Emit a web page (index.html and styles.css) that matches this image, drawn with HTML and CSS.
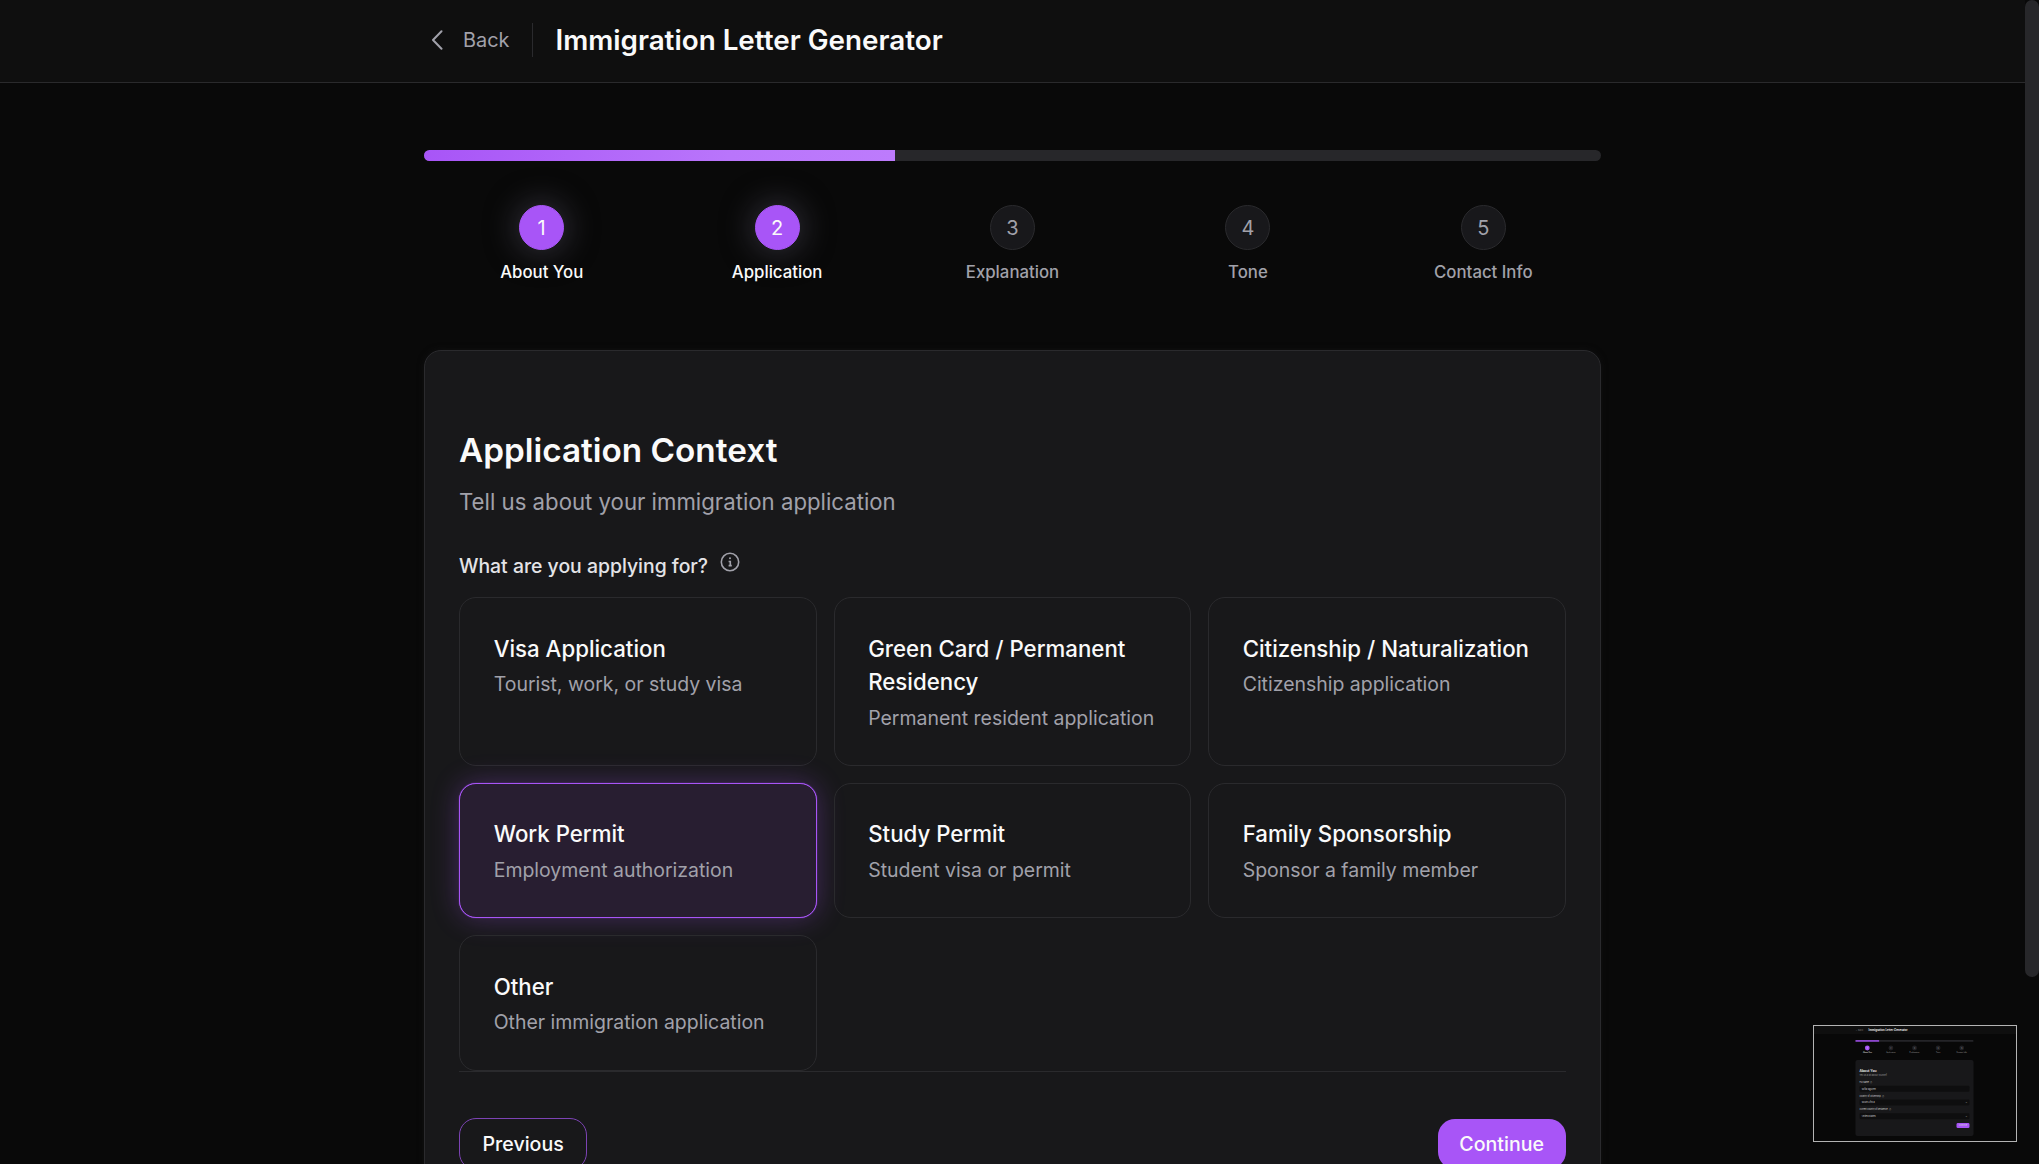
FILE: index.html
```html
<!DOCTYPE html>
<html lang="en">
<head>
<meta charset="utf-8">
<title>Immigration Letter Generator</title>
<link rel="stylesheet" href="styles.css">
</head>
<body>
<div class="viewport">
  <header class="topbar">
    <div class="topbar-inner">
      <a class="back">
        <svg class="chevron" viewBox="0 0 12 20"><path d="M10.500 1.200 2 10l8.500 8.800"/></svg>
        <span>Back</span>
      </a>
      <span class="separator"></span>
      <h1 class="page-title">Immigration Letter Generator</h1>
    </div>
  </header>

  <main class="content">
    <div class="progress"><div class="progress-fill" style="width:40%"></div></div>
    <ol class="steps">
      <li class="step active"><span class="dot">1</span><span class="step-name">About You</span></li>
      <li class="step active"><span class="dot">2</span><span class="step-name">Application</span></li>
      <li class="step"><span class="dot">3</span><span class="step-name">Explanation</span></li>
      <li class="step"><span class="dot">4</span><span class="step-name">Tone</span></li>
      <li class="step"><span class="dot">5</span><span class="step-name">Contact Info</span></li>
    </ol>

    <section class="panel">
      <h2 class="panel-title">Application Context</h2>
      <p class="panel-subtitle">Tell us about your immigration application</p>
      <div class="question">
        <span>What are you applying for?</span>
        <svg class="info" viewBox="0 0 20 20"><circle cx="10" cy="10" r="8.700"/><path d="M8.600 9.500H10.300V13.500M8.600 13.600H11.800"/><circle class="info-dot" cx="10" cy="6.300" r="1"/></svg>
      </div>
      <div class="options">
        <div class="option"><h3>Visa Application</h3><p>Tourist, work, or study visa</p></div>
        <div class="option"><h3>Green Card / Permanent Residency</h3><p>Permanent resident application</p></div>
        <div class="option"><h3>Citizenship / Naturalization</h3><p>Citizenship application</p></div>
        <div class="option selected"><h3>Work Permit</h3><p>Employment authorization</p></div>
        <div class="option"><h3>Study Permit</h3><p>Student visa or permit</p></div>
        <div class="option"><h3>Family Sponsorship</h3><p>Sponsor a family member</p></div>
        <div class="option"><h3>Other</h3><p>Other immigration application</p></div>
      </div>
      <div class="actions">
        <button class="btn btn-outline">Previous</button>
        <button class="btn btn-solid">Continue</button>
      </div>
    </section>
  </main>

  <div class="scroll-thumb"></div>

  <aside class="preview">
    <div class="mini">
      <div class="mini-top"><span class="mini-back">‹&nbsp; Back</span><span class="mini-heading">Immigration Letter Generator</span></div>
      <div class="mini-progress"><div class="mini-fill" style="width:20%"></div></div>
      <div class="mini-steps">
        <div class="mini-step on"><i>1</i><span>About You</span></div>
        <div class="mini-step"><i>2</i><span>Application</span></div>
        <div class="mini-step"><i>3</i><span>Explanation</span></div>
        <div class="mini-step"><i>4</i><span>Tone</span></div>
        <div class="mini-step"><i>5</i><span>Contact Info</span></div>
      </div>
      <div class="mini-panel">
        <div class="mini-title">About You</div>
        <div class="mini-sub">Tell us a bit about yourself</div>
        <div class="mini-label">Full Name &nbsp;ⓘ</div>
        <div class="mini-input"><span>Sofia Nguyen</span></div>
        <div class="mini-label">Country of Citizenship &nbsp;&nbsp;ⓘ</div>
        <div class="mini-input"><span>South Africa</span><span>⌄</span></div>
        <div class="mini-label">Current Country of Residence &nbsp;&nbsp;ⓘ</div>
        <div class="mini-input"><span>United States</span><span>⌄</span></div>
        <div class="mini-button">Continue</div>
      </div>
    </div>
  </aside>
</div>
</body>
</html>
```
FILE: styles.css
```css
* { box-sizing: border-box; }
html, body { margin: 0; height: 100%; overflow: hidden; }
body { background: #090909; color: #fafafa; font-family: Inter, sans-serif; }
h1, h2, h3, p, ol { margin: 0; padding: 0; }
.viewport { position: relative; height: 1164px; overflow: hidden; padding-right: 14px; }

.topbar { height: 83px; background: #0f0f0f; border-bottom: 1px solid #2a2a2c; }
.topbar-inner { width: 1177px; height: 80px; margin: 0 auto; display: flex; align-items: center; }
.back { display: flex; align-items: center; gap: 20px; padding-left: 7px; color: #a1a1aa; font-size: 19.9px; font-weight: 400; }
.chevron { width: 12px; height: 20px; fill: none; stroke: #a1a1aa; stroke-width: 2; stroke-linecap: round; stroke-linejoin: round; }
.separator { width: 1px; height: 34px; margin: 0 22px 0 23px; background: #2a2a2d; }
.page-title { font-size: 27.8px; font-weight: 600; }

.content { width: 1177px; margin: 0 auto; padding-top: 67px; }
.progress { height: 11px; border-radius: 6px; background: #27272a; overflow: hidden; }
.progress-fill { height: 100%; background: linear-gradient(90deg, #a855f7, #b975fb 65%, #bd7bfc); }
.steps { display: grid; grid-template-columns: repeat(5, 1fr); margin-top: 44px; list-style: none; }
.step { display: flex; flex-direction: column; align-items: center; gap: 11px; color: #a1a1aa; }
.dot { width: 45px; height: 45px; border-radius: 50%; display: flex; align-items: center; justify-content: center; background: #18181b; border: 1px solid #2a2a2d; font-size: 20px; font-weight: 400; }
.step-name { font-size: 16.8px; font-weight: 500; line-height: 22px; }
.step.active { color: #fafafa; }
.step.active .dot { background: #a855f7; border-color: #a855f7; box-shadow: 0 0 28px 6px rgba(60, 58, 70, .6); }

.panel { margin-top: 67px; height: 900px; padding: 79px 34.500px 0 34px; background: #18181a; border: 1px solid #2a2a2d; border-radius: 17px; box-shadow: 0 0 6px #101011; }
.panel-title { font-size: 33.3px; font-weight: 600; line-height: 40px; }
.panel-subtitle { margin-top: 15px; font-size: 22.2px; line-height: 33px; color: #a1a1aa; }
.question { display: flex; align-items: center; gap: 12px; margin-top: 34px; height: 28px; font-size: 19.4px; font-weight: 500; color: #e4e4e7; }
.info { width: 20px; height: 20px; margin-top: -8px; fill: none; stroke: #a1a1aa; stroke-width: 1.6; }
.info-dot { fill: #a1a1aa; stroke: none; }
.options { display: grid; grid-template-columns: repeat(3, 1fr); gap: 16.8px 17px; margin-top: 17px; }
.option { padding: 33.7px 33.4px 32.4px 33.7px; border: 1px solid #2a2a2d; border-radius: 17px; }
.option h3 { font-size: 22.25px; font-weight: 500; line-height: 33.4px; margin-right: -4px; }
.option p { margin-top: 6.2px; font-size: 19.47px; line-height: 27.9px; color: #a1a1aa; white-space: nowrap; }
.option.selected { background: #281e31; border-color: #a855f7; box-shadow: 0 0 28px rgba(168, 85, 247, .3), 0 0 1px #a855f7; }
.actions { display: flex; justify-content: space-between; align-items: center; border-top: 1px solid #2a2a2d; padding-top: 46px; }
.btn { height: 50px; border: 0; border-radius: 17px; padding: 0 21.5px; font: 500 19.6px Inter, sans-serif; color: #fafafa; background: none; }
.btn-outline { height: 52px; padding: 0 22.500px; border: 1px solid #7c43b4; }
.btn-solid { background: #a855f7; }

.scroll-thumb { position: absolute; right: 0; top: 0; width: 14px; height: 977px; border-radius: 7px; background: #27272a; }

/* Picture-in-picture of the previous step, authored at ten times its drawn size */
.preview { position: absolute; left: 1813px; top: 1025px; width: 204px; height: 117px; border: 1px solid #b4b4b4; overflow: hidden; background: #080808; }
.mini { width: 2020px; height: 1150px; transform: scale(.1); transform-origin: 0 0; color: #d4d4d8; }
.mini-top { height: 80px; padding-left: 420px; background: #0f0f0f; display: flex; align-items: center; gap: 54px; line-height: 60px; }
.mini-back { font-size: 22px; color: #777; }
.mini-heading { font-size: 28px; font-weight: 600; color: #fff; }
.mini-progress { width: 1180px; height: 18px; margin: 60px 0 0 415px; border-radius: 9px; background: #242428; }
.mini-fill { height: 100%; background: #8a45ca; }
.mini-steps { width: 1180px; margin: 38px 0 0 415px; display: grid; grid-template-columns: repeat(5, 1fr); }
.mini-step { display: flex; flex-direction: column; align-items: center; gap: 6px; font-size: 18px; line-height: 24px; color: #999; }
.mini-step i { width: 48px; height: 48px; border-radius: 50%; background: #202024; font-style: normal; text-align: center; line-height: 48px; }
.mini-step.on { color: #fff; }
.mini-step.on i { background: #a855f7; }
.mini-panel { width: 1180px; height: 760px; margin: 65px 0 0 415px; padding: 85px 40px 0; border-radius: 20px; background: #18181a; display: flex; flex-direction: column; }
.mini-title { font-size: 34px; font-weight: 600; line-height: 44px; color: #fff; }
.mini-sub { margin-bottom: 16px; font-size: 22px; line-height: 44px; color: #999; }
.mini-label { margin-top: 22px; font-size: 20px; line-height: 26px; }
.mini-input { height: 60px; margin: 22px 0 7px; padding: 0 22px; border-radius: 14px; background: #0e0e0f; font-size: 22px; line-height: 58px; display: flex; justify-content: space-between; }
.mini-button { align-self: flex-end; margin-top: 32px; width: 130px; height: 50px; border-radius: 14px; background: #a855f7; text-align: center; font-size: 20px; line-height: 50px; }
```
